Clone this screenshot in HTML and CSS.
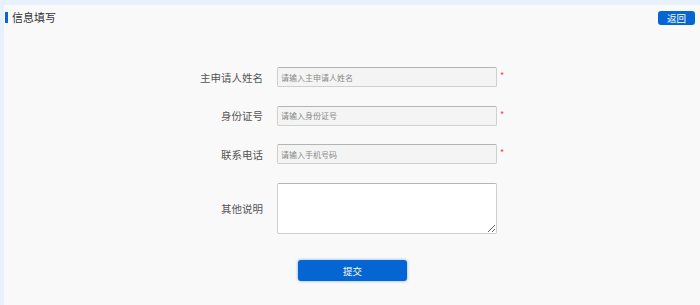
FILE: index.html
```html
<!DOCTYPE html>
<html lang="zh-CN">
<head>
<meta charset="utf-8">
<title>信息填写</title>
<link rel="stylesheet" href="styles.css">
</head>
<body>
<div class="panel">
  <div class="header">
    <div class="title"><span class="marker"></span><span>信息填写</span></div>
    <button class="back" type="button">返回</button>
  </div>
  <form class="form">
    <div class="row">
      <label class="label">主申请人姓名</label>
      <input class="field" type="text" placeholder="请输入主申请人姓名">
      <span class="req">*</span>
    </div>
    <div class="row">
      <label class="label">身份证号</label>
      <input class="field" type="text" placeholder="请输入身份证号">
      <span class="req">*</span>
    </div>
    <div class="row">
      <label class="label">联系电话</label>
      <input class="field" type="text" placeholder="请输入手机号码">
      <span class="req">*</span>
    </div>
    <div class="row">
      <label class="label">其他说明</label>
      <textarea class="field area"></textarea>
    </div>
    <div class="actions">
      <button class="submit" type="button">提交</button>
    </div>
  </form>
</div>
</body>
</html>
```

FILE: styles.css
```css
html, body {
  margin: 0;
  padding: 0;
  height: 100%;
}
body {
  background: #e8f2fe;
  font-family: "Noto Sans CJK SC", "Noto Sans", sans-serif;
  color: #333;
  overflow: hidden;
}
.panel {
  margin: 5px 0 0 4px;
  height: 300px;
  background: #f9f9f9;
  padding-top: 6px;
  box-sizing: border-box;
}
.header {
  display: flex;
  justify-content: space-between;
  align-items: flex-start;
  height: 14px;
  padding-right: 5px;
}
.title {
  display: flex;
  align-items: center;
  gap: 4px;
  padding-left: 1px;
  font-size: 11px;
  line-height: 12px;
  color: #333;
}
.marker {
  display: block;
  width: 3px;
  height: 11px;
  background: #0a66d0;
}
.back {
  height: 14px;
  padding: 0 9px;
  border: none;
  border-radius: 3px;
  background: #0566d3;
  color: #fff;
  font-family: inherit;
  font-size: 9.5px;
  line-height: 14px;
}
.form {
  margin-top: 42px;
  display: flex;
  flex-direction: column;
  gap: 18.5px;
}
.row {
  display: flex;
  align-items: center;
}
.label {
  width: 259px;
  margin-right: 14px;
  text-align: right;
  font-size: 10.5px;
  color: #555;
}
.field {
  box-sizing: border-box;
  width: 220px;
  height: 20px;
  margin: 0;
  padding: 0 3px;
  border: 1px solid #cfcfcf;
  border-top-color: #b4b4b4;
  border-radius: 2px;
  background: #f4f4f4;
  font-family: inherit;
  font-size: 8px;
  color: #333;
  outline: none;
}
.field::placeholder {
  color: #888;
}
.area {
  height: 51px;
  background: #fff;
  resize: both;
}
.req {
  margin-left: 3px;
  align-self: flex-start;
  margin-top: 5px;
  color: #ef4444;
  font-size: 9px;
  line-height: 8px;
}
.actions {
  padding-left: 294px;
  margin-top: 3.5px;
}
.submit {
  width: 109px;
  height: 21px;
  border: none;
  border-radius: 3px;
  background: #0566d3;
  box-shadow: 0 0 3px rgba(5, 102, 211, 0.55);
  color: #fff;
  font-family: inherit;
  font-size: 9.5px;
}
```
